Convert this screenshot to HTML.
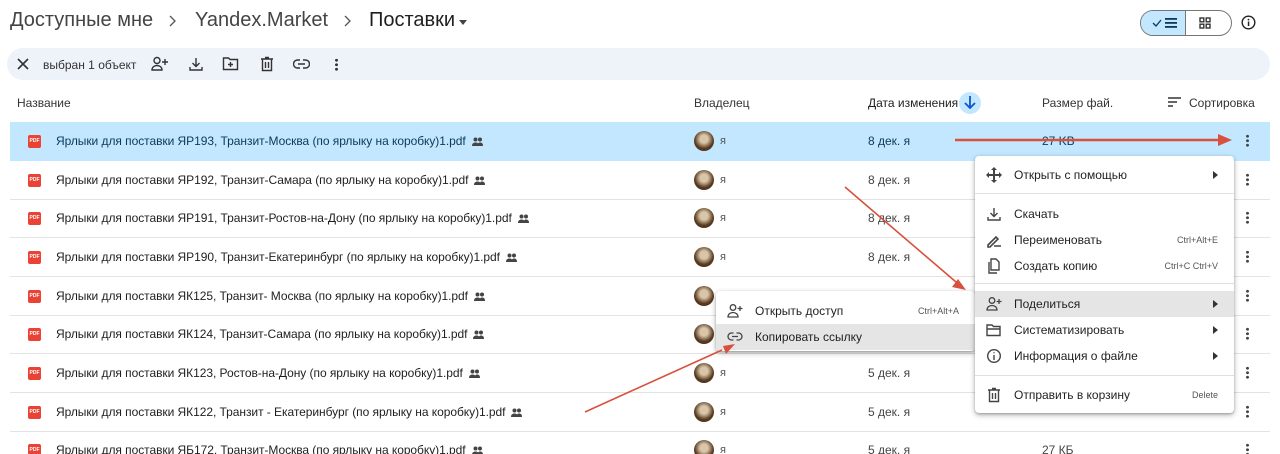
<!DOCTYPE html>
<html><head><meta charset="utf-8"><style>
*{margin:0;padding:0;box-sizing:border-box}
html,body{width:1280px;height:454px;overflow:hidden}
body{background:#fff;font-family:"Liberation Sans","Noto Sans CJK SC",sans-serif;color:#1f1f1f;position:relative}
.a{position:absolute}
.bc{top:9px;font-size:20px;color:#444;white-space:nowrap}
.chev{position:absolute;top:15px}
.row{position:absolute;left:10px;width:1260px;height:39px;border-bottom:1px solid #e3e3e3}
.row.sel{background:#c2e7ff;border-bottom:none}
.pdf{position:absolute;left:18px;top:13px;width:13px;height:13px;background:#ea4335;border-radius:2px;color:#fff;font-size:5px;font-weight:bold;line-height:13px;text-align:center}
.nm{position:absolute;left:46px;top:12px;font-size:12px;letter-spacing:-0.05px;white-space:nowrap}
.nm svg{vertical-align:-1px;margin-left:6px}
.av{position:absolute;left:684px;top:9px;width:20px;height:20px;border-radius:50%;background:radial-gradient(circle at 50% 40%,#d9c6a8 0 25%,#5a3b22 60%,#3a2616)}
.ya{position:absolute;left:710px;top:13px;font-size:11px;color:#555}
.dt{position:absolute;left:858px;top:12px;font-size:12px;color:#444}
.dots{position:absolute;left:1236px;top:12px;width:3px;height:13px;background:radial-gradient(circle,#444 1.3px,transparent 1.6px) 0 0/3px 4.5px repeat-y}
.menu{position:absolute;background:#fff;border-radius:4px;box-shadow:0 2px 6px rgba(0,0,0,.3),0 1px 2px rgba(0,0,0,.2)}
.mi{position:absolute;left:0;right:0;height:26px;font-size:12px;line-height:26px;padding-left:39px;white-space:nowrap}
.mi .k{position:absolute;right:16px;top:0;font-size:9px;color:#555}
.mi .ar{position:absolute;right:16px;top:9px;width:0;height:0;border-left:5px solid #333;border-top:4px solid transparent;border-bottom:4px solid transparent}
.mi svg{position:absolute;left:11px;top:5px}
.sep{position:absolute;left:0;right:0;height:1px;background:#e0e0e0}
.hl{background:#e5e5e5}
</style></head><body>
<div class="a bc" style="left:10px">Доступные мне</div>
<svg class="chev" style="left:168px" width="8" height="12" fill="none" stroke="#555" stroke-width="1.3"><path d="M2 1l5 5-5 5"/></svg>
<div class="a bc" style="left:195px">Yandex.Market</div>
<svg class="chev" style="left:343px" width="8" height="12" fill="none" stroke="#555" stroke-width="1.3"><path d="M2 1l5 5-5 5"/></svg>
<div class="a bc" style="left:369px;color:#1f1f1f">Поставки</div>
<div class="a" style="left:459px;top:20px;border-top:5px solid #444;border-left:4px solid transparent;border-right:4px solid transparent"></div>

<div class="a" style="left:1140px;top:10px;width:92px;height:26px;border:1px solid #747775;border-radius:13px;overflow:hidden">
 <div class="a" style="left:0;top:0;width:45px;height:24px;background:#c2e7ff;border-right:1px solid #747775"></div>
 <svg class="a" style="left:11px;top:8px" width="10" height="8" fill="none" stroke="#0b3a5b" stroke-width="1.3"><path d="M1 4l3 3 5-6"/></svg>
 <svg class="a" style="left:24px;top:7px" width="12" height="10" fill="#0b3a5b"><rect y="0" width="12" height="1.8"/><rect y="4" width="12" height="1.8"/><rect y="8" width="12" height="1.8"/></svg>
 <svg class="a" style="left:58px;top:6px" width="12" height="12" fill="none" stroke="#333" stroke-width="1.4"><rect x="1" y="1" width="3.8" height="3.8"/><rect x="7.2" y="1" width="3.8" height="3.8"/><rect x="1" y="7.2" width="3.8" height="3.8"/><rect x="7.2" y="7.2" width="3.8" height="3.8"/></svg>
</div>
<svg class="a" style="left:1241px;top:15px" width="15" height="15"><circle cx="7.5" cy="7.5" r="6.3" fill="none" stroke="#222" stroke-width="1.4"/><rect x="6.8" y="6.5" width="1.5" height="4.5" fill="#222"/><circle cx="7.5" cy="4.6" r=".9" fill="#222"/></svg>

<div class="a" style="left:7px;top:48px;width:1263px;height:32px;background:#eef2f9;border-radius:16px"></div>
<svg class="a" style="left:17px;top:58px" width="12" height="12" stroke="#333" stroke-width="1.6"><path d="M1 1l10 10M11 1L1 11"/></svg>
<div class="a" style="left:43px;top:58px;font-size:12px;color:#333">выбран 1 объект</div>
<svg class="a" style="left:151px;top:56px" width="18" height="16" fill="none" stroke="#333" stroke-width="1.4"><circle cx="6" cy="4.5" r="3"/><path d="M1 14c0-3 2.5-4.5 5-4.5s5 1.5 5 4.5z"/><path d="M14 3v6M11 6h6"/></svg>
<svg class="a" style="left:188px;top:56px" width="16" height="16" fill="none" stroke="#333" stroke-width="1.4"><path d="M8 2v8M4.5 7L8 10.5 11.5 7M2 11v3h12v-3"/></svg>
<svg class="a" style="left:222px;top:56px" width="17" height="15" fill="none" stroke="#333" stroke-width="1.4"><path d="M1.5 2h5l1.5 1.5h7.5v10h-14z"/><path d="M8.5 6v5M6 8.5h5"/></svg>
<svg class="a" style="left:260px;top:56px" width="14" height="16" fill="none" stroke="#333" stroke-width="1.4"><path d="M1 3h12M5 1.5h4M2.5 3v11.5h9V3M5.5 6v6M8.5 6v6"/></svg>
<svg class="a" style="left:293px;top:58px" width="17" height="12" fill="none" stroke="#333" stroke-width="1.4"><path d="M7 2H4.5a4 4 0 0 0 0 8H7M10 2h2.5a4 4 0 0 1 0 8H10M5 6h7"/></svg>
<div class="a" style="left:335px;top:58px;width:3px;height:13px;background:radial-gradient(circle,#333 1.3px,transparent 1.6px) 0 0/3px 4.5px repeat-y"></div>

<div class="a" style="left:17px;top:96px;font-size:12px;color:#333">Название</div>
<div class="a" style="left:694px;top:96px;font-size:12px;color:#333">Владелец</div>
<div class="a" style="left:868px;top:96px;font-size:12px;color:#1f1f1f">Дата изменения</div>
<div class="a" style="left:959px;top:92px;width:22px;height:22px;border-radius:50%;background:#c2e7ff"></div>
<svg class="a" style="left:963px;top:95px" width="14" height="15" fill="none" stroke="#0b57d0" stroke-width="1.8"><path d="M7 1v12M2 8l5 5 5-5"/></svg>
<div class="a" style="left:1042px;top:96px;font-size:12px;color:#333">Размер фай.</div>
<svg class="a" style="left:1168px;top:97px" width="13" height="10" fill="none" stroke="#333" stroke-width="1.4"><path d="M0 1h13M0 5h9M0 9h5"/></svg>
<div class="a" style="left:1189px;top:96px;font-size:12px;color:#333">Сортировка</div>

<svg width="0" height="0" style="position:absolute"><defs><g id="pp" fill="#444"><circle cx="3.5" cy="2.5" r="2"/><circle cx="8" cy="2.5" r="2"/><path d="M0 9c0-2.5 1.5-3.5 3.5-3.5S7 6.5 7 9zM5 9c.5-2.5 1.5-3.5 3-3.5 2 0 3 1 3 3.5z"/></g></defs></svg>

<div class="row sel" style="top:122px"><div class="pdf">PDF</div><div class="nm" style="color:#0b3a5b">Ярлыки для поставки ЯР193, Транзит-Москва (по ярлыку на коробку)1.pdf<svg width="11" height="9"><use href="#pp"/></svg></div><div class="av"></div><div class="ya">я</div><div class="dt" style="color:#0b3a5b">8 дек. я</div><div class="a" style="left:1032px;top:12px;font-size:12px;color:#0b3a5b">27 KB</div><div class="dots"></div></div>
<div class="row" style="top:161px"><div class="pdf">PDF</div><div class="nm">Ярлыки для поставки ЯР192, Транзит-Самара (по ярлыку на коробку)1.pdf<svg width="11" height="9"><use href="#pp"/></svg></div><div class="av"></div><div class="ya">я</div><div class="dt">8 дек. я</div><div class="dots"></div></div>
<div class="row" style="top:199px"><div class="pdf">PDF</div><div class="nm">Ярлыки для поставки ЯР191, Транзит-Ростов-на-Дону (по ярлыку на коробку)1.pdf<svg width="11" height="9"><use href="#pp"/></svg></div><div class="av"></div><div class="ya">я</div><div class="dt">8 дек. я</div><div class="dots"></div></div>
<div class="row" style="top:238px"><div class="pdf">PDF</div><div class="nm">Ярлыки для поставки ЯР190, Транзит-Екатеринбург (по ярлыку на коробку)1.pdf<svg width="11" height="9"><use href="#pp"/></svg></div><div class="av"></div><div class="ya">я</div><div class="dt">8 дек. я</div><div class="dots"></div></div>
<div class="row" style="top:277px"><div class="pdf">PDF</div><div class="nm">Ярлыки для поставки ЯК125, Транзит- Москва (по ярлыку на коробку)1.pdf<svg width="11" height="9"><use href="#pp"/></svg></div><div class="av"></div><div class="ya">я</div><div class="dt">5 дек. я</div><div class="dots"></div></div>
<div class="row" style="top:315px"><div class="pdf">PDF</div><div class="nm">Ярлыки для поставки ЯК124, Транзит-Самара (по ярлыку на коробку)1.pdf<svg width="11" height="9"><use href="#pp"/></svg></div><div class="av"></div><div class="ya">я</div><div class="dt">5 дек. я</div><div class="dots"></div></div>
<div class="row" style="top:354px"><div class="pdf">PDF</div><div class="nm">Ярлыки для поставки ЯК123, Ростов-на-Дону (по ярлыку на коробку)1.pdf<svg width="11" height="9"><use href="#pp"/></svg></div><div class="av"></div><div class="ya">я</div><div class="dt">5 дек. я</div><div class="dots"></div></div>
<div class="row" style="top:393px"><div class="pdf">PDF</div><div class="nm">Ярлыки для поставки ЯК122, Транзит - Екатеринбург (по ярлыку на коробку)1.pdf<svg width="11" height="9"><use href="#pp"/></svg></div><div class="av"></div><div class="ya">я</div><div class="dt">5 дек. я</div><div class="dots"></div></div>
<div class="row" style="top:431px"><div class="pdf">PDF</div><div class="nm">Ярлыки для поставки ЯБ172, Транзит-Москва (по ярлыку на коробку)1.pdf<svg width="11" height="9"><use href="#pp"/></svg></div><div class="av"></div><div class="ya">я</div><div class="dt">5 дек. я</div><div class="a" style="left:1032px;top:12px;font-size:12px;color:#444">27 КБ</div><div class="dots"></div></div>

<div class="menu" style="left:716px;top:291px;width:259px;height:60px">
 <div class="mi" style="top:7px"><svg width="16" height="16" fill="none" stroke="#444" stroke-width="1.3"><circle cx="6" cy="4.5" r="2.8"/><path d="M1 14c0-3 2.5-4.5 5-4.5s5 1.5 5 4.5z"/><path d="M13 3v5M10.5 5.5h5"/></svg>Открыть доступ<span class="k">Ctrl+Alt+A</span></div>
 <div class="mi hl" style="top:33px"><svg width="16" height="16" fill="none" stroke="#444" stroke-width="1.3"><path d="M6.5 4H4.5a3.5 3.5 0 0 0 0 7h2M9.5 4h2a3.5 3.5 0 0 1 0 7h-2M5 7.5h6"/></svg>Копировать ссылку</div>
</div>

<div class="menu" style="left:975px;top:156px;width:259px;height:257px">
 <div class="mi" style="top:6px"><svg width="16" height="16" fill="#444"><path d="M8 0l3 3H5zM8 16l3-3H5zM0 8l3-3v6zM16 8l-3-3v6z"/><rect x="7" y="3" width="2" height="10"/><rect x="3" y="7" width="10" height="2"/></svg>Открыть с помощью<span class="ar"></span></div>
 <div class="sep" style="top:37px"></div>
 <div class="mi" style="top:45px"><svg width="16" height="16" fill="none" stroke="#444" stroke-width="1.4"><path d="M8 2v8M4.5 7L8 10.5 11.5 7M2 11v3h12v-3"/></svg>Скачать</div>
 <div class="mi" style="top:71px"><svg width="16" height="16" fill="none" stroke="#444" stroke-width="1.6"><path d="M2 13l8-8 2 2-8 8H2zM8 14h7"/></svg>Переименовать<span class="k">Ctrl+Alt+E</span></div>
 <div class="mi" style="top:97px"><svg width="16" height="16" fill="none" stroke="#444" stroke-width="1.4"><path d="M5 1h5l3 3v8H5zM3 4v11h8"/></svg>Создать копию<span class="k">Ctrl+C Ctrl+V</span></div>
 <div class="sep" style="top:127px"></div>
 <div class="mi hl" style="top:135px"><svg width="16" height="16" fill="none" stroke="#444" stroke-width="1.3"><circle cx="6" cy="4.5" r="2.8"/><path d="M1 14c0-3 2.5-4.5 5-4.5s5 1.5 5 4.5z"/><path d="M13 3v5M10.5 5.5h5"/></svg>Поделиться<span class="ar"></span></div>
 <div class="mi" style="top:161px"><svg width="16" height="16" fill="none" stroke="#444" stroke-width="1.4"><path d="M1 3h5l1.5 1.5H14v9H1zM1 7h13"/></svg>Систематизировать<span class="ar"></span></div>
 <div class="mi" style="top:187px"><svg width="16" height="16" fill="none" stroke="#444" stroke-width="1.4"><circle cx="8" cy="8" r="6.3"/><path d="M8 7v5M8 4.3v1"/></svg>Информация о файле<span class="ar"></span></div>
 <div class="sep" style="top:219px"></div>
 <div class="mi" style="top:226px"><svg width="16" height="16" fill="none" stroke="#444" stroke-width="1.4"><path d="M2 3h12M6 1.5h4M3.5 3v11.5h9V3M6.5 6v6M9.5 6v6"/></svg>Отправить в корзину<span class="k">Delete</span></div>
</div>

<svg class="a" style="left:0;top:0" width="1280" height="454">
 <g stroke="#d9503f" fill="none">
  <path d="M955 140L1220 140" stroke-width="2.5"/>
  <path d="M845 187L956 282" stroke-width="1.6"/>
  <path d="M585 412L722 350" stroke-width="1.6"/>
 </g>
 <g fill="#d9503f">
  <path d="M1232 140l-14-6v12z"/>
  <path d="M966 290l-14-3 6-8z"/>
  <path d="M735 344l-9 10-3-8z"/>
 </g>
</svg>
</body></html>
